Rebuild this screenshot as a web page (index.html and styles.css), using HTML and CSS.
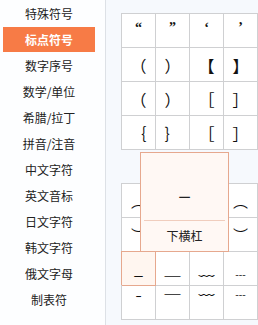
FILE: index.html
```html
<!DOCTYPE html>
<html lang="zh">
<head>
<meta charset="utf-8">
<link rel="stylesheet" href="styles.css">
</head>
<body>
<div class="app">
  <nav class="side">
    <div class="item">特殊符号</div>
    <div class="item active">标点符号</div>
    <div class="item">数字序号</div>
    <div class="item">数学/单位</div>
    <div class="item">希腊/拉丁</div>
    <div class="item">拼音/注音</div>
    <div class="item">中文字符</div>
    <div class="item">英文音标</div>
    <div class="item">日文字符</div>
    <div class="item">韩文字符</div>
    <div class="item">俄文字母</div>
    <div class="item">制表符</div>
  </nav>
  <main class="panel">
    <div class="grid serif">
      <div class="cell q">“</div><div class="cell q">”</div><div class="cell q">‘</div><div class="cell q">’</div>
      <div class="cell">（</div><div class="cell">）</div><div class="cell">【</div><div class="cell">】</div>
      <div class="cell">（</div><div class="cell">）</div><div class="cell">［</div><div class="cell">］</div>
      <div class="cell">｛</div><div class="cell">｝</div><div class="cell">［</div><div class="cell">］</div>
    </div>
    <div class="grid second">
      <div class="cell">︵</div><div class="cell">︶</div><div class="cell">︹</div><div class="cell">︵</div>
      <div class="cell">︶</div><div class="cell">︺</div><div class="cell">︿</div><div class="cell">︶</div>
      <div class="cell hl low">_</div><div class="cell low">＿</div><div class="cell low">﹏</div><div class="cell low">﹍</div>
      <div class="cell high">¯</div><div class="cell high">￣</div><div class="cell high">﹋</div><div class="cell high">﹉</div>
      <div class="tip">
        <div class="tip-sym">_</div>
        <div class="tip-name">下横杠</div>
      </div>
    </div>
  </main>
</div>
</body>
</html>
```
FILE: styles.css
```css
html, body {
  margin: 0;
  padding: 0;
  width: 258px;
  height: 325px;
  overflow: hidden;
  background: #f6f9fd;
}
.app {
  display: flex;
  height: 325px;
  font-family: "Noto Sans CJK SC", "Noto Sans", sans-serif;
  color: #333;
}
.side {
  width: 106px;
  box-sizing: border-box;
  padding: 0 10px 0 3px;
  background: #fdfeff;
  border-right: 1px solid #dde1e6;
  flex: none;
}
.item {
  height: 25px;
  line-height: 25px;
  margin: 1px 0;
  text-align: center;
  font-size: 12px;
  color: #222;
}
.item.active {
  background: #f77b46;
  color: #fff;
  font-weight: bold;
}
.panel {
  flex: 1;
  padding: 13px 0 0 15px;
}
.grid {
  display: grid;
  grid-template-columns: repeat(4, 34px);
  grid-auto-rows: 34px;
  border-top: 1px solid #cfd0d2;
  border-left: 1px solid #cfd0d2;
  background: #fff;
  width: 136px;
}
.grid.second {
  margin-top: 33px;
  position: relative;
}
.cell {
  box-sizing: border-box;
  border-right: 1px solid #cfd0d2;
  border-bottom: 1px solid #cfd0d2;
  display: flex;
  align-items: center;
  justify-content: center;
  font-size: 15px;
  color: #111;
}
.serif .cell {
  font-family: "Noto Sans CJK SC", serif;
  font-size: 16px;
}
.serif .cell.q {
  font-family: "Liberation Serif", serif;
  font-size: 14px;
  font-weight: bold;
  align-items: flex-start;
  padding-top: 6px;
}
.cell.low {
  font-size: 16px;
  padding-bottom: 2px;
}
.cell.high {
  font-size: 16px;
  align-items: flex-start;
  padding-top: 3px;
}
.cell.hl {
  background: #fff6f0;
  border-right-color: #e6a88e;
  border-bottom-color: #e6a88e;
  box-shadow: -1px -1px 0 0 #e6a88e;
  position: relative;
  z-index: 1;
}
.tip {
  position: absolute;
  left: 18px;
  top: -32px;
  width: 89px;
  height: 100px;
  box-sizing: border-box;
  border: 1px solid #e6a88e;
  background: #fff8f4;
  z-index: 2;
  display: flex;
  flex-direction: column;
  padding: 0 3px;
}
.tip-sym {
  height: 67px;
  border-bottom: 1px solid #f0cdbd;
  display: flex;
  align-items: center;
  justify-content: center;
  font-size: 20px;
  color: #222;
}
.tip-name {
  flex: 1;
  display: flex;
  align-items: center;
  justify-content: center;
  font-size: 12px;
  line-height: 16px;
  color: #222;
}
```
